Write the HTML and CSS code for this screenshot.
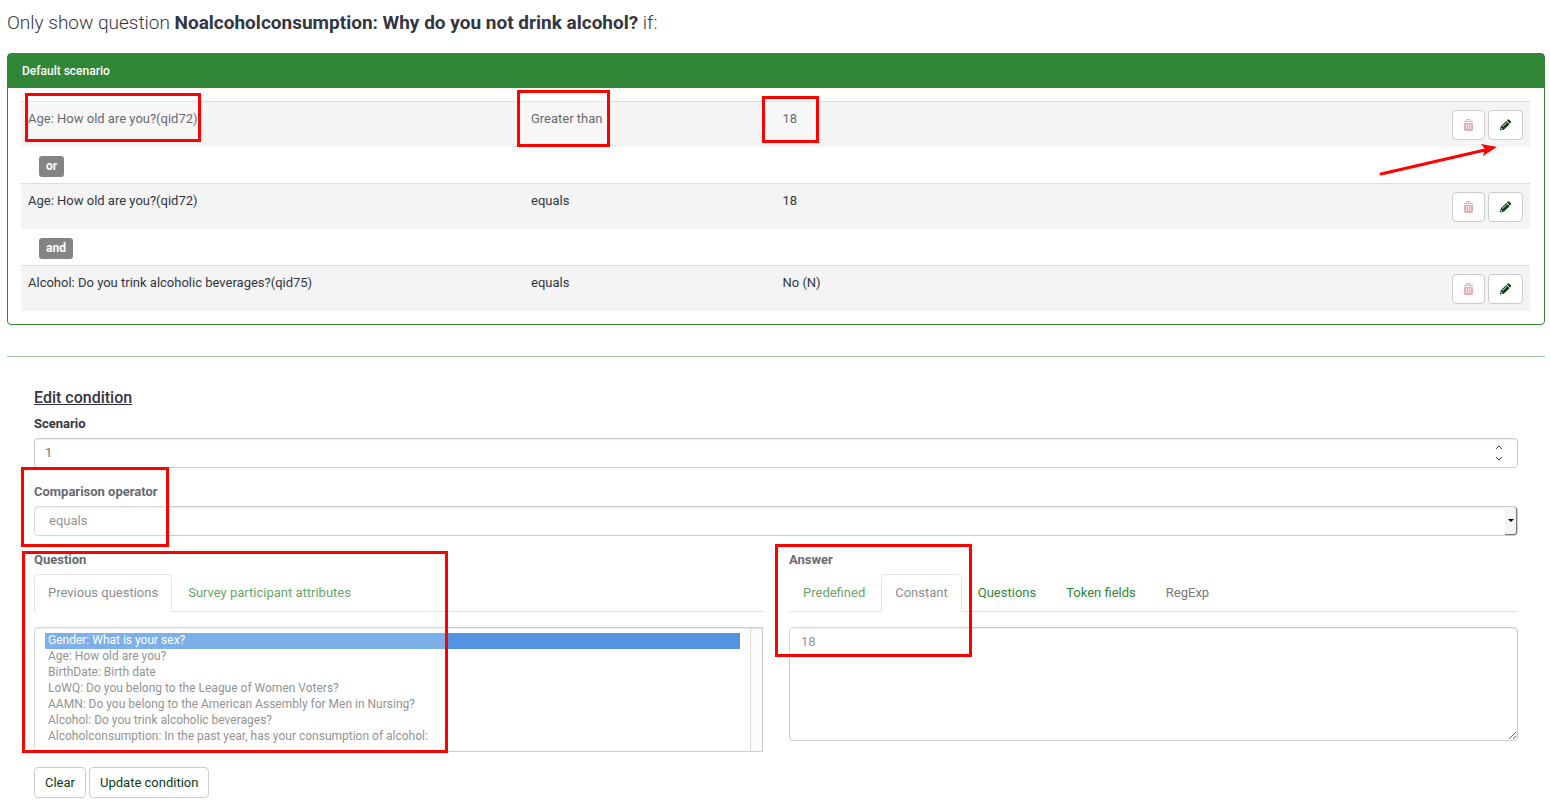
FILE: index.html
```html
<!DOCTYPE html>
<html lang="en">
<head>
    <meta charset="UTF-8">
    <meta name="viewport" content="width=device-width, initial-scale=1.0">
    <title>Condition designer</title>
    <link rel="stylesheet" href="styles.css">
</head>
<body>
    <!-- Icons used by the row buttons -->
    <svg class="sprite" aria-hidden="true">
        <symbol id="icon-trash" viewBox="0 0 11 12">
            <path fill-rule="evenodd" d="M4 0h3l1 1v1h2v1H1V2h2V1zM4 1v1h3V1zM1 4h9v7l-1 1H2l-1-1zM3 5v5h1V5zM5 5v5h1V5zM7 5v5h1V5z"/>
            <path opacity="0.4" d="M3 5h1v5H3zM5 5h1v5H5zM7 5h1v5H7z"/>
        </symbol>
        <symbol id="icon-pencil" viewBox="0 0 12 12">
            <path fill-rule="evenodd" d="M6.8 1.5l3.6 3.6-6.2 6.1L0 12l.8-4.4zM1.5 9l-.4 1.9 2-.4zM2.4 7.6l.5.5 4.6-4.6-.5-.5z"/>
            <path d="M7.4.9L8.5.1q.8-.4 1.4 0l1.9 1.9q.5.8 0 1.5l-.8 1z"/>
        </symbol>
    </svg>

    <h1>Only show question <strong>Noalcoholconsumption: Why do you not drink alcohol?</strong> if:</h1>

    <!-- Scenario with its conditions -->
    <section class="panel">
        <h2 class="panel-heading">Default scenario</h2>
        <div class="panel-body">
            <table class="conditions">
                <colgroup>
                    <col class="col-question">
                    <col class="col-operator">
                    <col class="col-answer">
                    <col>
                </colgroup>
                <tr class="condition">
                    <td>Age: How old are you?(qid72)<span class="mark mark-question"></span></td>
                    <td>Greater than<span class="mark mark-operator"></span></td>
                    <td>18<span class="mark mark-value"></span></td>
                    <td>
                        <div class="actions">
                            <button type="button" class="btn btn-delete" aria-label="Delete"><svg><use href="#icon-trash"/></svg></button>
                            <button type="button" class="btn btn-edit" aria-label="Edit"><svg><use href="#icon-pencil"/></svg></button>
                        </div>
                        <svg class="arrow" viewBox="0 0 120 34" aria-hidden="true">
                            <path class="arrow-line" d="M3 30L107 6"/>
                            <path d="M119 3L103 0l4 5-2 7z"/>
                        </svg>
                    </td>
                </tr>
                <tr class="joiner">
                    <td colspan="4"><span class="label">or</span></td>
                </tr>
                <tr class="condition">
                    <td>Age: How old are you?(qid72)</td>
                    <td>equals</td>
                    <td>18</td>
                    <td>
                        <div class="actions">
                            <button type="button" class="btn btn-delete" aria-label="Delete"><svg><use href="#icon-trash"/></svg></button>
                            <button type="button" class="btn btn-edit" aria-label="Edit"><svg><use href="#icon-pencil"/></svg></button>
                        </div>
                    </td>
                </tr>
                <tr class="joiner">
                    <td colspan="4"><span class="label">and</span></td>
                </tr>
                <tr class="condition">
                    <td>Alcohol: Do you trink alcoholic beverages?(qid75)</td>
                    <td>equals</td>
                    <td>No (N)</td>
                    <td>
                        <div class="actions">
                            <button type="button" class="btn btn-delete" aria-label="Delete"><svg><use href="#icon-trash"/></svg></button>
                            <button type="button" class="btn btn-edit" aria-label="Edit"><svg><use href="#icon-pencil"/></svg></button>
                        </div>
                    </td>
                </tr>
            </table>
        </div>
    </section>

    <hr>

    <!-- Edit form -->
    <form class="edit-form">
        <h3>Edit condition</h3>

        <div class="field">
            <label for="scenario">Scenario</label>
            <div class="control">
                <input type="number" id="scenario" class="form-control" value="1">
                <svg class="spinner" viewBox="0 0 8 16" aria-hidden="true">
                    <path d="M1 4l3-3 3 3M1 12l3 3 3-3"/>
                </svg>
            </div>
        </div>

        <div class="field">
            <label for="operator">Comparison operator</label>
            <div class="control">
                <select id="operator" class="form-control dropdown">
                    <option>equals</option>
                    <option>Greater than</option>
                </select>
                <span class="dropdown-arrow"></span>
            </div>
            <span class="mark mark-comparison"></span>
        </div>

        <div class="columns">
            <div class="column">
                <label for="questions">Question</label>
                <ul class="tabs">
                    <li><a href="#previous" class="active">Previous questions</a></li>
                    <li><a href="#attributes">Survey participant attributes</a></li>
                </ul>
                <select id="questions" class="form-control question-list" size="7">
                    <option selected>Gender: What is your sex?</option>
                    <option>Age: How old are you?</option>
                    <option>BirthDate: Birth date</option>
                    <option>LoWQ: Do you belong to the League of Women Voters?</option>
                    <option>AAMN: Do you belong to the American Assembly for Men in Nursing?</option>
                    <option>Alcohol: Do you trink alcoholic beverages?</option>
                    <option>Alcoholconsumption: In the past year, has your consumption of alcohol:</option>
                </select>
                <span class="mark mark-list"></span>
            </div>
            <div class="column">
                <label for="answer">Answer</label>
                <ul class="tabs">
                    <li><a href="#predefined">Predefined</a></li>
                    <li><a href="#constant" class="active">Constant</a></li>
                    <li><a href="#questions">Questions</a></li>
                    <li><a href="#token">Token fields</a></li>
                    <li><a href="#regexp" class="disabled">RegExp</a></li>
                </ul>
                <textarea id="answer" class="form-control">18</textarea>
                <span class="mark mark-answer"></span>
            </div>
        </div>

        <div class="buttons">
            <button type="reset" class="btn">Clear</button>
            <button type="button" class="btn">Update condition</button>
        </div>
    </form>
</body>
</html>
```
FILE: styles.css
```css
* {
    box-sizing: border-box;
}
body {
    font-family: Roboto, sans-serif;
    font-size: 13px;
    line-height: 18px;
    margin: 0;
    padding: 10px 5px 0 7px;
    color: #333641;
    background-color: #fff;
}
.sprite {
    display: none;
}
h1 {
    font-size: 19px;
    font-weight: 300;
    line-height: 25px;
    margin: 0 0 18px;
}
h1 strong {
    font-weight: 700;
}

/* Scenario panel */
.panel {
    border: 1px solid #328637;
    border-radius: 4px;
}
.panel-heading {
    margin: 0;
    padding: 8px 14px;
    font-size: 12px;
    font-weight: 500;
    color: #fff;
    background-color: #328637;
}
.panel-body {
    padding: 13px 14px 13px 13px;
}
.conditions {
    width: 100%;
    table-layout: fixed;
    border-spacing: 0;
}
.col-question {
    width: 33.333%;
}
.col-operator {
    width: 16.667%;
}
.col-answer {
    width: 25%;
}
.condition td {
    position: relative;
    height: 46px;
    padding: 8px 7px 7px;
    vertical-align: top;
    border-top: 1px solid #ddd;
    background-color: #f4f4f4;
}
.joiner td {
    height: 36px;
    padding: 9px 18px 6px;
}
.label {
    display: block;
    width: fit-content;
    padding: 0 7px;
    font-size: 12px;
    font-weight: 700;
    line-height: 21px;
    color: #fff;
    background-color: #848484;
    border-radius: 3px;
}
.actions {
    display: flex;
    justify-content: flex-end;
    gap: 3px;
}

/* Buttons */
.btn {
    height: 30px;
    padding: 0 10px;
    font-family: inherit;
    font-size: 13px;
    color: #0c3b17;
    background-color: #fff;
    border: 1px solid #ccc;
    border-radius: 4px;
    cursor: pointer;
}
.btn svg {
    display: block;
    width: 11px;
    height: 12px;
    fill: currentColor;
}
.btn-delete {
    color: #e8adb3;
}
.btn-edit {
    padding: 0 11px;
}

hr {
    margin: 31px 0 0;
    border: 0;
    border-top: 1px solid #98c29b;
}

/* Edit form */
.edit-form {
    padding: 31px 27px 0;
}
h3 {
    margin: 0 0 7px;
    font-size: 16px;
    font-weight: 500;
    line-height: 20px;
    text-decoration: underline;
}
label {
    display: block;
    margin-bottom: 5px;
    font-size: 13px;
    font-weight: 700;
}
.field {
    position: relative;
    margin-bottom: 15px;
}
.control {
    position: relative;
}
.form-control {
    display: block;
    width: 100%;
    height: 30px;
    margin: 0;
    padding: 0 10px 2px;
    font-family: inherit;
    font-size: 13px;
    color: #6f6f6f;
    background-color: #fff;
    border: 1px solid #ccc;
    border-radius: 4px;
    box-shadow: inset 0 1px 1px rgba(0, 0, 0, 0.08);
    appearance: none;
}
.form-control::-webkit-inner-spin-button {
    appearance: none;
}
.dropdown {
    padding: 0 14px 2px;
}
.spinner {
    position: absolute;
    top: 7px;
    right: 15px;
    width: 8px;
    height: 16px;
    fill: none;
    stroke: #444;
    pointer-events: none;
}
.dropdown-arrow {
    position: absolute;
    top: 1px;
    right: 1px;
    bottom: 1px;
    width: 12px;
    background-color: #f4f5f6;
    border-right: 1px solid #777;
    border-bottom: 1px solid #777;
    border-radius: 0 3px 3px 0;
    pointer-events: none;
}
.dropdown-arrow::after {
    content: "";
    position: absolute;
    top: 12px;
    left: 3px;
    border: 3px solid transparent;
    border-top-color: #000;
    border-bottom: 0;
}
.columns {
    display: grid;
    grid-template-columns: 1fr 1fr;
    gap: 26px;
}
.column {
    position: relative;
    min-width: 0;
}
.tabs {
    display: flex;
    gap: 2px;
    margin: 0 0 15px;
    padding: 0;
    list-style: none;
    border-bottom: 1px solid #ddd;
}
.tabs a {
    display: block;
    margin-bottom: -1px;
    padding: 9px 13px;
    color: #328637;
    text-decoration: none;
    border: 1px solid transparent;
    border-radius: 4px 4px 0 0;
}
.tabs .active {
    color: #666;
    background-color: #fff;
    border-color: #ddd;
    border-bottom-color: #fff;
}
.tabs .disabled {
    color: #777;
}
/* the right hand strip is the scroll track */
.question-list {
    height: 125px;
    padding: 5px 22px 5px 10px;
    font-size: 12px;
    overflow: hidden;
    background: linear-gradient(to right, #ddd 1px, #fbfbfb 1px) right / 12px 100% no-repeat #fff;
    border-radius: 4px 0 0 4px;
}
.question-list option {
    min-height: 16px;
    padding: 0 3px;
    line-height: 16px;
}
.question-list option:checked {
    background: linear-gradient(#5294e2, #5294e2);
    -webkit-text-fill-color: #fff;
}
textarea.form-control {
    height: 114px;
    padding: 5px 11px;
    line-height: 18px;
    resize: vertical;
}
.buttons {
    display: flex;
    gap: 3px;
    margin-top: 15px;
}
.buttons .btn {
    height: 31px;
}

/* Red highlights */
.mark {
    position: absolute;
    z-index: 1;
    background-color: rgba(255, 255, 255, 0.25);
    border: 3px solid #f00;
    pointer-events: none;
}
.mark-question {
    top: -9px;
    left: 4px;
    width: 176px;
    height: 49px;
}
.mark-operator {
    top: -12px;
    left: -7px;
    width: 93px;
    height: 57px;
}
.mark-value {
    top: -6px;
    left: -13px;
    width: 57px;
    height: 47px;
}
.mark-comparison {
    top: -16px;
    left: -13px;
    width: 148px;
    height: 80px;
}
.mark-list {
    top: 0;
    left: -12px;
    width: 426px;
    height: 202px;
}
.mark-answer {
    top: -7px;
    left: -14px;
    width: 197px;
    height: 113px;
}
.arrow {
    position: absolute;
    z-index: 1;
    top: 42px;
    right: 32px;
    width: 120px;
    height: 34px;
    fill: #f00;
    pointer-events: none;
}
.arrow-line {
    stroke: #f00;
    stroke-width: 3;
    stroke-linecap: round;
}
```
